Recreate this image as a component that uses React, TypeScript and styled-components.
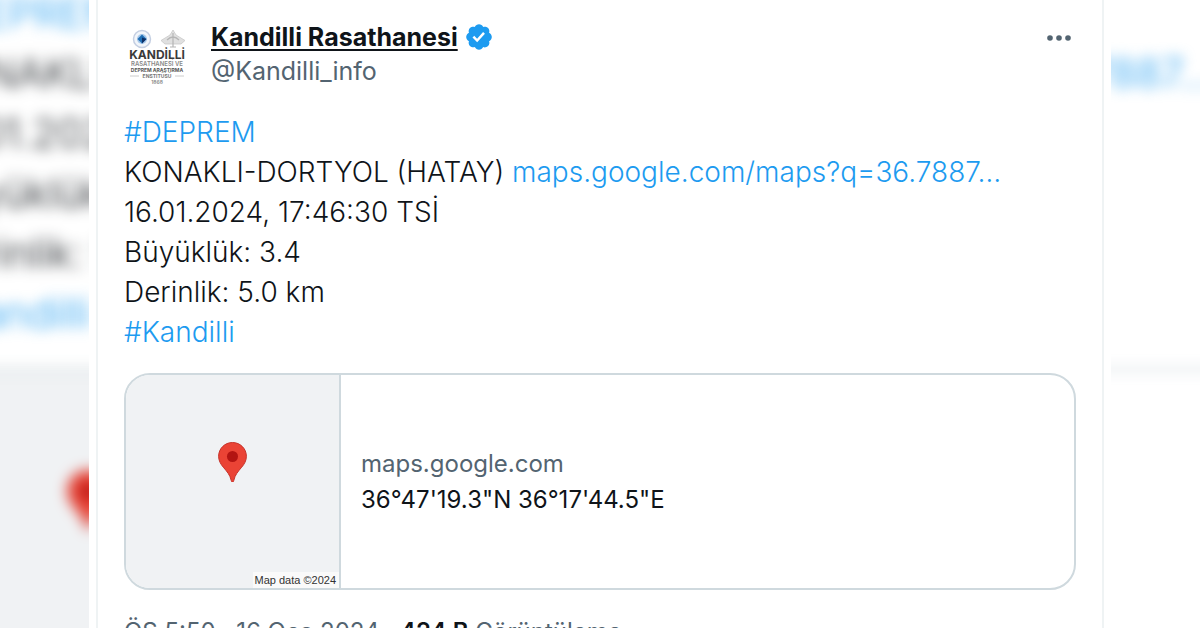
import React from "react";
import styled, { createGlobalStyle } from "styled-components";

const colors = {
  ink: "#0f1419",
  muted: "#536471",
  link: "#1d9bf0",
  line: "#cfd9de",
  faint: "#eff3f4",
  map: "#f0f2f4",
};

const GlobalStyle = createGlobalStyle`
  *, *::before, *::after { box-sizing: border-box; }
  body {
    margin: 0;
    background: #fff;
    color: ${colors.ink};
    font-family: Inter, "Liberation Sans", sans-serif;
  }
`;

const Page = styled.main`
  position: relative;
  height: 100vh;
  overflow: hidden;
  padding: 0 89px;
`;

const Backdrop = styled.div`
  position: absolute;
  inset: -17px -160px auto -71px;
  filter: blur(7px);
`;

const BackdropText = styled.div`
  font-size: 41px;
  font-weight: 300;
  line-height: 60px;
  white-space: nowrap;
`;

const BackdropCard = styled.div`
  display: flex;
  height: 304px;
  margin-top: 25px;
  border: 3px solid ${colors.line};
  border-radius: 34px;
  overflow: hidden;
`;

const Column = styled.div`
  position: relative;
  min-height: 100%;
  padding: 0 7px;
  background: #fff;
`;

const Post = styled.article`
  min-height: 100vh;
  padding: 20px 26px 0;
  border: solid ${colors.faint};
  border-width: 0 2px;
`;

const Header = styled.header`
  display: flex;
  align-items: center;
  gap: 23px;
`;

const Avatar = styled.svg`
  flex: none;
  width: 64px;
  height: 64px;
`;

const Author = styled.div`
  flex: 1;
  min-width: 0;
  font-size: 25px;
  line-height: 34px;
`;

const NameRow = styled.div`
  display: flex;
  align-items: center;
  gap: 6px;
`;

const Name = styled.a`
  color: ${colors.ink};
  font-weight: 700;
  text-decoration: underline;
  text-decoration-thickness: 2px;
  text-underline-offset: 3px;
  text-decoration-skip-ink: none;
`;

const Handle = styled.a`
  color: ${colors.muted};
  text-decoration: none;
`;

const Badge = styled.svg`
  width: 30px;
  height: 30px;
  fill: ${colors.link};
`;

const MoreButton = styled.button`
  align-self: flex-start;
  display: flex;
  align-items: center;
  height: 36px;
  padding: 0 4px;
  border: 0;
  background: none;
  cursor: pointer;

  svg {
    width: 26px;
    height: 8px;
    fill: ${colors.muted};
  }
`;

const Body = styled.div`
  margin-top: 24px;
  font-size: 28px;
  font-weight: 300;
  line-height: 40px;
`;

const Link = styled.a`
  color: ${colors.link};
  text-decoration: none;
`;

const Preview = styled.a`
  display: flex;
  height: 217px;
  margin-top: 21px;
  border: 2px solid ${colors.line};
  border-radius: 26px;
  overflow: hidden;
  color: ${colors.ink};
  text-decoration: none;
`;

const MapTile = styled.div<{ $width: number }>`
  position: relative;
  display: grid;
  place-items: center;
  flex: none;
  width: ${(p) => p.$width}px;
  border-right: 2px solid ${colors.line};
  background: ${colors.map};
`;

const Pin = styled.svg<{ $width: number }>`
  width: ${(p) => p.$width}px;
  margin-bottom: 40px;
`;

const MapCredit = styled.small`
  position: absolute;
  right: 0;
  bottom: 0;
  padding: 0 3px 0 2px;
  background: #fafafa;
  color: #333;
  font: 11px/16px "Liberation Sans", sans-serif;
`;

const PreviewText = styled.div`
  align-self: center;
  padding-left: 20px;
  font-size: 24px;
  line-height: 36px;
`;

const Domain = styled.div`
  color: ${colors.muted};
`;

const Meta = styled.footer`
  margin-top: 25px;
  color: ${colors.muted};
  font-size: 24px;
  line-height: 34px;
  white-space: nowrap;

  strong {
    color: ${colors.ink};
    font-weight: 600;
  }
`;

const PostText = () => (
  <>
    <Link href="#deprem">#DEPREM</Link>
    <br />
    KONAKLI-DORTYOL (HATAY) <Link href="#maps">maps.google.com/maps?q=36.7887…</Link>
    <br />
    16.01.2024, 17:46:30 TSİ
    <br />
    Büyüklük: 3.4
    <br />
    Derinlik: 5.0 km
    <br />
    <Link href="#kandilli">#Kandilli</Link>
  </>
);

const MapPin = ({ width }: { width: number }) => (
  <Pin $width={width} viewBox="0 0 29 40" aria-hidden="true">
    <path
      d="M14.5 0.5C6.7 0.5 0.6 6.7 0.6 14.3c0 4.300 2 7.700 4.700 10.900 3.600 4.300 6.700 7.500 7.900 13.200.3 1.400.6 1.600 1.300 1.600s1-.2 1.300-1.600c1.200-5.700 4.300-8.900 7.900-13.200 2.700-3.200 4.700-6.600 4.700-10.900C28.400 6.700 22.300 0.500 14.500 0.500z"
      fill="#ea4335"
      stroke="#c5332a"
      strokeWidth="1"
    />
    <circle cx="14.500" cy="14.500" r="5.500" fill="#b31412" />
  </Pin>
);

const Logo = () => (
  <Avatar viewBox="0 0 64 64" role="img" aria-label="Kandilli Rasathanesi">
    <circle cx="18" cy="17" r="8.500" fill="#f1f5fa" stroke="#c4cfe2" strokeWidth="1.500" />
    <circle cx="18" cy="17" r="5" fill="#a9c9ea" />
    <path d="M18 12.500l4.500 4.500-4.500 4.500-4.500-4.500z" fill="#1f6fb5" />
    <path d="M18 15.500l4.500 1.500-4.500 4.500z" fill="#0d2f66" />
    <path d="M49 8l3 5 9 5.500-4 3.500H41l-4-3.500L46 13z" fill="#e0e0e0" stroke="#c8c8c8" strokeWidth="0.800" />
    <path d="M43 18q6-6 12 0M49 11v14M46 25h6" fill="none" stroke="#b5b5b5" strokeWidth="1.200" />
    <g textAnchor="middle" fontFamily="Inter, sans-serif">
      <text x="33" y="37" fontSize="12" fontWeight="700" fill="#3a3a3a">KANDİLLİ</text>
      <text x="33" y="44" fontSize="6" fontWeight="600" fill="#888">RASATHANESİ VE</text>
      <text x="33" y="50" fontSize="5" fontWeight="700" fill="#555">DEPREM ARAŞTIRMA</text>
      <text x="33" y="56" fontSize="5" fontWeight="700" fill="#777">ENSTİTÜSÜ</text>
      <text x="33" y="62" fontSize="5" fontWeight="600" fill="#888">1868</text>
    </g>
    <path d="M6 54h9M51 54h9" stroke="#ccc" strokeWidth="1" />
  </Avatar>
);

export default function App() {
  return (
    <Page>
      <GlobalStyle />
      <Backdrop aria-hidden="true" inert>
        <BackdropText>
          <PostText />
        </BackdropText>
        <BackdropCard>
          <MapTile $width={315}>
            <MapPin width={43} />
          </MapTile>
        </BackdropCard>
      </Backdrop>
      <Column>
        <Post>
          <Header>
            <Logo />
            <Author>
              <NameRow>
                <Name href="#profile">Kandilli Rasathanesi</Name>
                <Badge viewBox="0 0 22 22" role="img" aria-label="Verified">
                  <path d="M20.396 11c-.018-.646-.215-1.275-.57-1.816-.354-.54-.852-.972-1.438-1.246.223-.607.27-1.264.14-1.897-.131-.634-.437-1.218-.882-1.687-.47-.445-1.053-.75-1.687-.882-.633-.13-1.29-.083-1.897.14-.273-.587-.704-1.086-1.245-1.44S11.647 1.62 11 1.604c-.646.017-1.273.213-1.813.568s-.969.854-1.24 1.44c-.608-.223-1.267-.272-1.902-.14-.635.13-1.22.436-1.69.882-.445.47-.749 1.055-.878 1.688-.13.633-.08 1.29.144 1.896-.587.274-1.087.705-1.443 1.245-.356.54-.555 1.17-.574 1.817.02.647.218 1.276.574 1.817.356.54.856.972 1.443 1.245-.224.606-.274 1.263-.144 1.896.13.634.433 1.218.877 1.688.47.443 1.054.747 1.687.878.633.132 1.29.084 1.897-.136.274.586.705 1.084 1.246 1.439.54.354 1.17.551 1.816.569.647-.016 1.276-.213 1.817-.567s.972-.854 1.245-1.44c.604.239 1.266.296 1.903.164.636-.132 1.22-.447 1.68-.907.46-.46.776-1.044.908-1.681s.075-1.299-.165-1.903c.586-.274 1.084-.705 1.439-1.246.354-.54.551-1.17.569-1.816zM9.662 14.85l-3.429-3.428 1.293-1.302 2.072 2.072 4.4-4.794 1.347 1.246z" />
                </Badge>
              </NameRow>
              <Handle href="#profile">@Kandilli_info</Handle>
            </Author>
            <MoreButton type="button" aria-label="More">
              <svg viewBox="0 0 26 8" aria-hidden="true">
                <circle cx="4" cy="4" r="2.800" />
                <circle cx="13" cy="4" r="2.800" />
                <circle cx="22" cy="4" r="2.800" />
              </svg>
            </MoreButton>
          </Header>
          <Body>
            <PostText />
          </Body>
          <Preview href="#maps">
            <MapTile $width={215}>
              <MapPin width={29} />
              <MapCredit>Map data ©2024</MapCredit>
            </MapTile>
            <PreviewText>
              <Domain>maps.google.com</Domain>
              <div>36°47'19.3"N 36°17'44.5"E</div>
            </PreviewText>
          </Preview>
          <Meta>
            ÖS 5:50 · 16 Oca 2024 · <strong>424 B</strong> Görüntüleme
          </Meta>
        </Post>
      </Column>
    </Page>
  );
}
